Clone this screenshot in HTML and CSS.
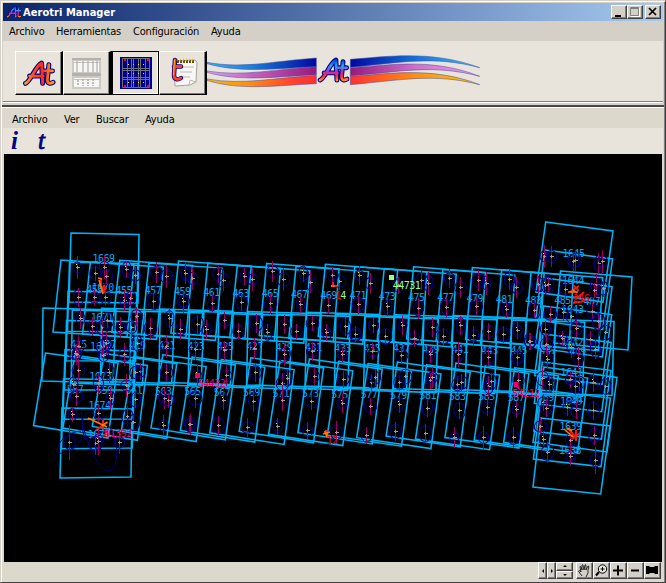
FILE: index.html
```html
<!DOCTYPE html>
<html lang="es">
<head>
<meta charset="utf-8">
<title>Aerotri Manager</title>
<link rel="stylesheet" href="styles.css">
</head>
<body>
<svg class="defs" width="0" height="0">
  <defs>
    <linearGradient id="warm" gradientUnits="userSpaceOnUse" x1="2" y1="0" x2="30" y2="0"><stop offset="0" stop-color="#ffb010"/><stop offset=".3" stop-color="#ff5020"/><stop offset=".6" stop-color="#ff2a20"/><stop offset="1" stop-color="#ffa010"/></linearGradient>
    <linearGradient id="cool" gradientUnits="userSpaceOnUse" x1="0" y1="2" x2="0" y2="24"><stop offset="0" stop-color="#0030d0"/><stop offset=".3" stop-color="#20a8f0"/><stop offset=".55" stop-color="#b030c0"/><stop offset=".78" stop-color="#ff3030"/><stop offset="1" stop-color="#ffb030"/></linearGradient>
    <symbol id="at" viewBox="0 0 32 26">
      <g fill="none" stroke-linecap="round" stroke-linejoin="round">
        <path style="stroke:var(--edge);stroke-width:4.800" d="M3 22.500C8 21 13 5 18.500 3L19.500 22.500M7 15.500H20M25.500 4.500L24 19C24 23 27 23 29.500 21.500M21 10.500H29"/>
        <path style="stroke:var(--ink);stroke-width:2.700" d="M3 22.500C8 21 13 5 18.500 3L19.500 22.500M7 15.500H20.010M25.500 4.500L24 19C24 23 27 23 29.500 21.500M21 10.500H29"/>
      </g>
    </symbol>
    <linearGradient id="blueL"><stop offset="0" stop-color="#30b8f8"/><stop offset=".4" stop-color="#1c80d8"/><stop offset="1" stop-color="#0008a0"/></linearGradient>
    <linearGradient id="blueR"><stop offset="0" stop-color="#0008a0"/><stop offset=".5" stop-color="#1470d8"/><stop offset="1" stop-color="#38c8ff"/></linearGradient>
    <linearGradient id="pinkL"><stop offset="0" stop-color="#e8a0f0"/><stop offset=".4" stop-color="#c864c0"/><stop offset="1" stop-color="#941a7c"/></linearGradient>
    <linearGradient id="pinkR"><stop offset="0" stop-color="#941a7c"/><stop offset=".5" stop-color="#d070c8"/><stop offset="1" stop-color="#f0a0f8"/></linearGradient>
    <linearGradient id="fireL"><stop offset="0" stop-color="#ffb800"/><stop offset=".4" stop-color="#ff8c10"/><stop offset=".8" stop-color="#ff4030"/><stop offset="1" stop-color="#ff3030"/></linearGradient>
    <linearGradient id="fireR"><stop offset="0" stop-color="#ff3030"/><stop offset=".55" stop-color="#ff9810"/><stop offset="1" stop-color="#ffc800"/></linearGradient>
  </defs>
</svg>
<div class="window">
  <header class="titlebar">
    <svg class="app-icon cool" width="16" height="14"><use href="#at"/></svg>
    <span class="title">Aerotri Manager</span>
    <div class="controls">
      <button class="ctl"><svg width="14" height="12"><path d="M3 9h6v2H3z"/></svg></button>
      <button class="ctl"><svg width="14" height="12"><path d="M2.500 1.500h8v8h-8zM2 2.500h9" fill="none" stroke="#808080"/><path d="M3 10.500h8.500V2" fill="none" stroke="#fff"/></svg></button>
      <button class="ctl close"><svg width="14" height="12"><path d="M3 2l7 7M10 2l-7 7" stroke="#000" stroke-width="1.700"/></svg></button>
    </div>
  </header>
  <nav class="menu main-menu"><span class="m1">Archivo</span><span class="m2">Herramientas</span><span class="m3">Configuración</span><span class="m4">Ayuda</span></nav>
  <section class="toolbar">
    <div class="tools">
      <button class="tool"><svg class="warm" width="34" height="27"><use href="#at"/></svg></button>
      <button class="tool"><svg width="32" height="32" viewBox="0 0 32 32"><path d="M1 1h29v31H1z" fill="#ccc9c4"/><path d="M1 1h29v2H1zM1 16h29v3H1z" fill="#b4b0ac"/><path d="M3 4h25v11H3zM3 21h25v9H3z" fill="#f6f6f4"/><path d="M6 4v11M12 4v11M17 4v11M22 4v11M26 4v11" stroke="#c0bdb8" stroke-width="1.500"/><path d="M12 22v7M17 22v7M22 22v7M6 24h3M6 27h3" stroke="#c0bdb8" stroke-width="2" stroke-dasharray="2 1"/><path d="M3 5.500h25M3 22.500h25" stroke="#a8a5a0" stroke-width=".6"/></svg></button>
      <button class="tool active"><svg width="32" height="32" viewBox="0 0 32 32"><path d="M0 0h32v32H0z" fill="#000084"/><path d="M2.500 1.500h27v29h-27zM2.500 11.500h27M2.500 13.500h27M2.500 20.500h27M2.500 22.500h27M7.500 2v28M11.500 2v28M13.500 2v28M18.500 2v28M20.500 2v28M25.500 2v28" fill="none" stroke="#777780" stroke-width=".9"/><path d="M4 2h2v2H4zM27 2h2v2h-2zM4 28h2v2H4zM27 28h2v2h-2z" fill="#f00"/><path d="M8 7.500h18M8 16.500h18M8 25.500h18" stroke="#fff000" stroke-dasharray="1 4"/></svg></button>
      <button class="tool"><svg width="34" height="32" viewBox="0 0 34 32"><path d="M8 4l21-1 2 2-1 20-6 3-15 1z" fill="#f8f7f5" stroke="#a5a29d"/><path d="M23 28l1-5 6 2M14 10h14M14 15h12M15 20h9" fill="none" stroke="#bbb8b3"/><path d="M11 4.500h17" stroke="#6b510c" stroke-width="3" stroke-dasharray="2 1"/><path d="M11 2.500h17" stroke="#edc634" stroke-width="2" stroke-dasharray="1 2"/><g fill="none" stroke-linecap="round"><path d="M9 3L8 18C8 23 12 23 15 21M8 9.500h7" stroke="#000080" stroke-width="4.500"/><path d="M9 3L8 18C8 23 12 23 15 21M8 9.500h7" stroke="#ff4020" stroke-width="2.800"/><path d="M8.500 3L7.500 18" stroke="#ffb020"/></g></svg></button>
    </div>
    <div class="banner">
      <svg width="273" height="42" viewBox="20 30 819 126">
        <g stroke="#4850a0" stroke-width="1.600">
          <path fill="url(#blueL)" d="M20 64C130 84 220 60 348 51V77C230 82 120 97 20 68z"/>
          <path fill="url(#pinkL)" d="M20 90C130 108 220 84 348 77V101C230 107 120 123 20 94z"/>
          <path fill="url(#fireL)" d="M20 114C130 133 220 110 348 103V128C230 133 120 150 20 118z"/>
          <path fill="url(#blueR)" d="M450 55C550 48 690 25 838 80C700 43 600 65 450 79z"/>
          <path fill="url(#pinkR)" d="M450 80C550 75 690 47 838 106C700 69 600 92 450 105z"/>
          <path fill="url(#fireR)" d="M450 106C550 101 690 73 838 131C700 95 600 118 450 131z"/>
        </g>
        <svg class="cool" x="350" y="48" width="98" height="80"><use href="#at"/></svg>
      </svg>
    </div>
  </section>
  <section class="viewer">
    <nav class="menu view-menu"><span class="v1">Archivo</span><span class="v2">Ver</span><span class="v3">Buscar</span><span class="v4">Ayuda</span></nav>
    <div class="view-tools"><i class="info">i</i><i>t</i></div>
    <svg id="map" class="map" width="658" height="408" viewBox="4 154 658 408"></svg>
    <footer class="statusbar">
      <button class="nav"><svg width="7" height="14"><path d="M5 5v4L3 7z"/></svg></button>
      <button class="nav"><svg width="7" height="14"><path d="M3 5v4l2-2z"/></svg></button>
      <div class="stack"><button><svg width="14" height="6"><path d="M5 4h4L7 2z"/></svg></button><button><svg width="14" height="6"><path d="M5 2h4L7 4z"/></svg></button></div>
      <button class="sb first"><svg width="15" height="15"><path d="M5 13L2 9c-1-2 1-2 2 0L3 4c0-1 1-1 2 3l0-5c1-1 1 0 2 5l1-5c1-1 1 0 1 5l2-4c1 0 1 1 0 4l0 3-2 4" fill="#d4d0c8" stroke="#000" stroke-width=".8"/></svg></button>
      <button class="sb"><svg width="15" height="15"><g fill="none" stroke="#000"><circle cx="8.500" cy="6" r="4.200" fill="#e8e4dc"/><path d="M6.500 6h4M8.500 4v4"/><path d="M5 9l-3 3.500" stroke-width="2"/></g></svg></button>
      <button class="sb"><svg width="15" height="15"><path d="M2 7.500h10M7 2.500v10" stroke="#000" stroke-width="2"/></svg></button>
      <button class="sb"><svg width="15" height="15"><path d="M3 7.500h8" stroke="#000" stroke-width="2"/></svg></button>
      <button class="sb"><svg width="15" height="15"><path d="M1 3h3l1 1h4l1-1h3v8h-3l-1-1H5l-1 1H1z"/></svg></button>
    </footer>
  </section>
</div>
<script src="map.js"></script>
</body>
</html>
```
FILE: styles.css
```css
* { box-sizing: border-box; }
body { margin: 0; width: 666px; height: 583px; overflow: hidden; background: #d4d0c8; font-family: "DejaVu Sans Condensed", "DejaVu Sans", sans-serif; font-stretch: condensed; font-size: 11px; color: #000; }
.defs { position: absolute; }
button { padding: 0; margin: 0; border: 0; background: #d4d0c8; display: flex; align-items: center; justify-content: center; }
.window { width: 666px; height: 583px; padding: 1px 1px 0 1px; border: 1px solid #d4d0c8; border-right-color: #404040; border-bottom-color: #404040; box-shadow: inset 1px 1px #fff, inset -1px -1px #808080; display: flex; flex-direction: column; }
.titlebar { height: 18px; margin: 1px 1px 0; display: flex; align-items: center; background: linear-gradient(90deg, #0a246a, #a6caf0); color: #fff; padding: 0 2px 0 3px; }
.app-icon { margin-right: 1px; }
.title { font-weight: bold; letter-spacing: .05px; white-space: nowrap; }
.controls { margin-left: auto; display: flex; }
.ctl { width: 16px; height: 14px; border: 1px solid #fff; border-right-color: #404040; border-bottom-color: #404040; box-shadow: inset -1px -1px #808080; }
.close { margin-left: 2px; }
.menu { display: flex; align-items: center; white-space: nowrap; letter-spacing: -.2px; }
.main-menu { height: 20px; margin: 0 1px; padding-left: 6px; }
.m1 { width: 47px; } .m2 { width: 77px; } .m3 { width: 78px; }
.toolbar { height: 61px; margin: 0 1px; padding: 10px 0 0 12px; display: flex; background: #e8e4dc; border-bottom: 1px solid #808080; box-shadow: 0 1px #fff; }
.tools { display: flex; height: 44px; width: 192px; flex: none; }
.tool { width: 48px; height: 44px; background: #e8e4dc; border: 1px solid #fff; border-right: 2px solid #000; border-bottom: 1px solid #000; box-shadow: inset -1px -1px #808080; }
.tool.active { border: 1px solid #000; border-left-width: 2px; box-shadow: inset -1px -1px #fff; }
.warm { --ink: url(#warm); --edge: #000080; }
.cool { --ink: url(#cool); --edge: #000080; }
.banner { height: 42px; }
.viewer { margin-top: 3px; flex: 1; border-top: 2px solid #484848; background: #dcd8cc; display: flex; flex-direction: column; box-shadow: inset 0 1px #fff; }
.view-menu { height: 21px; padding-left: 10px; flex: none; padding-top: 4px; }
.v1 { width: 52px; } .v2 { width: 32px; } .v3 { width: 49px; }
.view-tools { height: 26px; margin: 0 1px; padding-left: 8px; display: flex; align-items: center; background: #e8e4dc; color: #000084; font: italic bold 25px/24px "Liberation Serif", serif; }
.view-tools i { font-weight: normal; -webkit-text-stroke: .8px #000084; }
.view-tools .info { width: 27px; font-weight: bold; -webkit-text-stroke: 0; }
.map { display: block; margin-left: 2px; flex: none; background: #000; }
.statusbar { height: 18px; margin: 0 3px 0 2px; display: flex; justify-content: flex-end; }
.statusbar button { border: 1px solid #fff; border-right-color: #404040; border-bottom-color: #404040; box-shadow: inset -1px -1px #808080; }
.nav { width: 9px; height: 17px; }
.stack { width: 17px; height: 17px; display: flex; flex-direction: column; }
.stack button { width: 17px; height: 8.500px; }
.sb { width: 17px; height: 17px; }
.first { margin-left: 3px; }
.photo { fill: none; stroke: #00b2f8; stroke-width: 1.550; }
.zone { fill: none; stroke: #000088; stroke-width: 1; }
.residual { stroke: #98005f; stroke-width: 1; shape-rendering: crispEdges; }
.tie { stroke: #a098a0; stroke-width: 1; shape-rendering: crispEdges; }
.centre { fill: #fff000; }
.label { font: 10px "DejaVu Sans Mono", monospace; letter-spacing: -.5px; fill: #00a8ff; text-anchor: middle; }
.label.green { fill: #98ff80; } .label.pink { fill: #f00070; } .label.red { fill: #f00; }
.dot-green { fill: #98ff80; } .dot-pink { fill: #f00070; }
.star-red { fill: none; stroke: #f01818; stroke-width: 2; }
.star-orange { fill: none; stroke: #ff7800; stroke-width: 1.600; }
```
FILE: map.js
```js
const NS = "http://www.w3.org/2000/svg";
const map = document.getElementById("map");

function add(tag, cls, attrs, text) {
  const el = document.createElementNS(NS, tag);
  el.setAttribute("class", cls);
  for (const k in attrs) el.setAttribute(k, attrs[k]);
  if (text) el.textContent = text;
  map.appendChild(el);
}

// Interpolates footprint corners between the first and last photo of a strip.
function strip(count, first, last, jitter) {
  for (let i = 0; i < count; i++) {
    const t = i / (count - 1);
    const off = jitter && i && i < count - 1 ? [0, 1.5, -1, 1, -1.5][i % 5] : 0;
    const p = first.map((v, k) => (v + (last[k] - v) * t + (k % 2 ? off : 0)).toFixed(1));
    add("polygon", "photo", { points: p.join(" ") });
  }
}
strip(18, [61, 260, 134, 265, 127, 337, 53, 332], [560.5, 271, 632, 277, 628, 350, 554, 343], true);
strip(18, [43, 308, 116, 310, 113, 383, 42, 381], [541, 319, 614, 321.5, 612, 395.5, 539, 393], true);
strip(18, [45.5, 353, 118, 363, 108, 438, 33.5, 425.5], [544, 367, 617, 377.5, 607, 452, 533, 442], true);
strip(7, [71, 233, 139, 234.5, 138, 303, 69, 302], [62, 408, 132, 409, 131, 477, 60, 478]);
strip(8, [545.7, 222, 613, 231, 603, 302, 536, 292], [541, 418, 610, 426, 600.7, 494, 533, 487]);

function label(x, y, text, tone) { add("text", "label " + (tone || ""), { x, y }, text); }
for (let i = 0; i < 18; i++) {
  label(94.5 + i * 29.25, 293 + i * .7, String(453 + 2 * i));
  label(78.5 + i * 29.35, 348 + i * .4, String(415 + 2 * i));
  label(75 + i * 29.4, 393 + i * .5, String(557 + 2 * i));
}
for (let i = 0; i < 7; i++) label(103.5 - i * .8, 262 + i * 29.4, String(1669 + i));
[257, 284, 313, 346, 376, 405, 430, 454].forEach((y, i) => label(573.5 - i * .5, y, String(1645 - i)));

// Tie points per sheet: origin, then x, y, residual length at three units per pixel.
const sheets = [
  [30, 225, [142,127,66, 223,126,66, 196,145,40, 229,154,40, 290,133,46, 316,152,50, 379,142,60, 409,155,66, 466,145,60, 145,217,54, 193,217,44, 226,217,40, 283,226,60, 301,220,40, 370,229,40, 459,229,66, 151,280,60, 187,304,56, 217,307,50, 232,286,40, 271,307,60, 304,307,60, 319,274,54, 361,310,62, 418,280,56, 451,313,60, 145,364,66, 217,364,60, 230,355,66, 322,355,50, 409,364,66, 136,385,40]],
  [30, 350, [139,12,60, 220,15,50, 283,13,66, 145,61,66, 238,67,60, 331,64,50, 316,67,60, 409,67,56, 131,103,56, 205,100,60, 289,106,66, 139,139,56, 241,145,60, 316,148,46, 404,145,60, 415,151,40, 127,193,40, 205,190,50, 292,199,60, 310,217,40, 400,226,60, 478,223,50, 118,277,100, 196,280,66, 205,275,80, 268,277,66]],
  [180, 250, [16,70,60, 37,85,66, 115,73,50, 130,91,60, 193,79,50, 217,88,64, 277,64,60, 310,88,66, 370,70,48, 391,97,58, 457,76,50, 478,94,50, 10,154,60, 97,160,50, 184,157,50, 271,159,60, 361,163,50, 445,166,50, 535,163,50, 52,223,56, 79,238,56, 133,211,50, 175,244,50, 229,220,56, 262,247,50, 313,223,56, 349,244,40, 397,220,40, 439,247,50, 496,229,56, 526,253,50, 46,298,60, 133,301,54, 223,295,60, 313,313,66, 397,304,56, 487,313,44]],
  [180, 350, [52,77,60, 139,76,60, 226,67,56, 307,100,60, 322,85,46, 403,79,50, 490,88,46, 46,145,56, 130,151,56, 219,154,60, 307,151,60, 394,154,46, 487,160,54, 31,223,60, 115,226,56, 202,232,56, 292,229,46, 382,241,46, 469,247,66]],
  [350, 250, [28,76,56, 61,100,60, 145,106,50, 214,91,54, 235,100,66, 298,85,56, 331,112,60, 385,91,60, 409,100,66, 478,88,60, 499,112,60, 25,163,54, 112,169,56, 205,175,60, 289,172,54, 379,169,54, 469,178,46, 70,226,44, 16,253,40, 106,259,44, 157,226,54, 193,265,50, 247,232,54, 280,259,46, 331,226,54, 370,256,54, 415,244,46, 460,253,46, 502,241,46, 538,274,50, 67,304,50, 154,316,50, 241,313,50, 325,313,70, 415,322,50, 502,322,50]],
  [350, 350, [64,97,56, 76,82,50, 148,97,50, 166,79,50, 240,90,46, 247,83,60, 322,103,50, 334,97,46, 415,109,60, 424,94,46, 505,91,50, 61,169,50, 148,163,46, 232,175,46, 327,181,50, 412,172,50, 499,178,50, 49,256,50, 136,244,56, 226,250,56, 313,262,60, 400,262,66, 490,262,60]],
  [515, 215, [88,124,66, 109,124,60, 175,138,54, 181,136,60, 250,145,60, 262,139,66, 4,216,60, 70,207,50, 91,211,50, 100,208,40, 151,223,40, 245,208,60, 265,220,50, 238,226,40, 58,286,40, 106,298,50, 145,292,46, 169,304,50, 232,288,60, 250,318,50, 7,346,50, 91,343,50, 184,340,50, 271,352,66, 142,370,40, 226,373,46, 46,379,46, 94,388,60, 169,398,60, 241,403,54]],
  [515, 350, [97,28,54, 190,25,60, 7,22,50, 82,85,60, 103,103,50, 166,88,46, 193,97,50, 181,109,50, 235,97,54, 271,109,80, 85,157,50, 94,175,50, 157,172,46, 184,181,46, 235,181,56, 76,230,50, 85,268,50, 166,272,54, 238,256,56, 97,307,60, 165,319,56, 241,331,76]]
];
sheets.forEach(([ox, oy, v]) => {
  for (let i = 0; i < v.length; i += 3) {
    const x = Math.round(ox + v[i] / 3 - .5) + .5, y = Math.round(oy + v[i + 1] / 3 - .5) + .5, h = Math.round(v[i + 2] / 6) + .5;
    const n = i / 3;
    add("ellipse", "zone", { cx: x, cy: y, rx: 4.5 + (n % 4) * .6, ry: 5.5 + (n % 5) * .6, transform: `rotate(${(n % 7) * 4 - 12} ${x} ${y})` });
    add("path", "residual", { d: `M${x} ${y - h}v${2 * h}` });
    add("path", "tie", { d: `M${x - 2} ${y}h4M${x} ${y - 1.5}v3` });
    if (n % 4 === 0) add("rect", "centre", { x: x - 1.5, y: y - 3.5, width: 1, height: 1 });
  }
});
add("path", "zone", { d: "M81 412C84 440 96 468 108 471C116 470 119 455 115 440C112 425 96 409 86 414C80 418 82 434 86 440M81 431C67 432 55 444 58 452C67 458 78 446 82 438" });

label(406.5, 289, "44731", "green");
label(343, 299, "4", "green");
label(338, 299, "1", "red");
label(211.5, 387, "54432", "pink");
label(526, 397, "54212", "pink");
label(118, 437, "61392", "pink");
label(106, 437, "8", "red");
label(332, 444, "12", "red");
label(581, 302, "246", "red");
add("rect", "dot-green", { x: 389, y: 275, width: 5, height: 5 });
add("rect", "dot-pink", { x: 195, y: 373, width: 5, height: 5 });
add("path", "dot-pink", { d: "M513 382h5v4l3 5-5-4-2 1z" });
add("path", "star-red", { d: "M101 279v8l6 1M104 285v8M105 285l-4 6M96 430l12-8M103 420v10M333 282v5M331 286h6M324 432h5M326 430v5M570 292l9-6M573 285l6 6M576 299l8-7M568 428l9 11M572 439l8-6M576 430v11M573 303l12-2M573 297h8" });
add("path", "star-orange", { d: "M99 280l4 14M98 278l4 1M88 418l19 9M107 422l-5 4M331 286h4M323 434l7-2M325 431l2 6M568 292l10 0M572 289l5 4M564 429l9 8M567 428l5 3" });
```
